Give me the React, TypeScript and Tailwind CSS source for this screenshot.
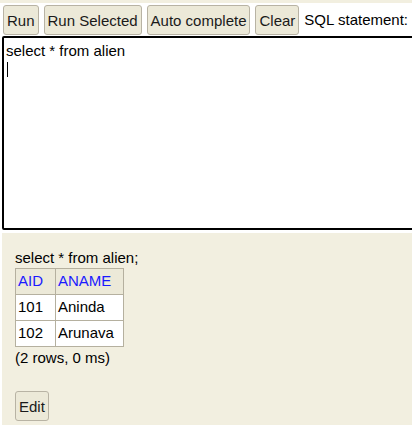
import React from "react";

const btn =
  "h-[30px] px-[3px] bg-[#ece9d8] border border-[#b8b3a4] rounded-[3px] text-[15px] text-[#1a1a1a] leading-none";

export default function App() {
  return (
    <div
      className="w-[412px] h-[425px] overflow-hidden bg-white relative"
      style={{ fontFamily: '"Liberation Sans", Arial, sans-serif' }}
    >
      <div className="h-[3px] bg-[#f2efe0]" />
      <div className="flex items-center gap-[5px] pl-[3px] mt-[2px] whitespace-nowrap">
        <button className={btn}>Run</button>
        <button className={btn}>Run Selected</button>
        <button className={btn}>Auto complete</button>
        <button className={btn}>Clear</button>
        <span className="text-[15px] text-black">SQL statement:</span>
      </div>
      <div className="ml-[2px] mt-[1px] w-[420px] h-[194px] border-[2px] border-black rounded-[2px] bg-white pl-[2px] pt-[4px] text-[15px] text-black">
        <div className="leading-[18px]">select * from alien</div>
        <div className="w-[1px] h-[15px] bg-black ml-[1px] mt-[2px]" />
      </div>
      <div className="ml-[2px] mt-[3px] h-[200px] bg-[#f2efe0] pl-[13px] pt-[16px] text-[15px] text-black">
        <div className="leading-[17px] mb-[2px]">select * from alien;</div>
        <table className="border-collapse text-[15px]">
          <thead>
            <tr>
              <th className="border border-[#b5b09f] bg-[#ece9d8] text-[#1a1aff] font-normal text-left px-[2px] h-[26px] w-[40px]">AID</th>
              <th className="border border-[#b5b09f] bg-[#ece9d8] text-[#1a1aff] font-normal text-left px-[2px] h-[26px] w-[68px]">ANAME</th>
            </tr>
          </thead>
          <tbody>
            <tr>
              <td className="border border-[#b5b09f] bg-white px-[2px] h-[26px]">101</td>
              <td className="border border-[#b5b09f] bg-white px-[2px] h-[26px]">Aninda</td>
            </tr>
            <tr>
              <td className="border border-[#b5b09f] bg-white px-[2px] h-[26px]">102</td>
              <td className="border border-[#b5b09f] bg-white px-[2px] h-[26px]">Arunava</td>
            </tr>
          </tbody>
        </table>
        <div className="leading-[17px] mt-[2px]">(2 rows, 0 ms)</div>
        <button className={btn + " mt-[25px]"}>Edit</button>
      </div>
    </div>
  );
}
